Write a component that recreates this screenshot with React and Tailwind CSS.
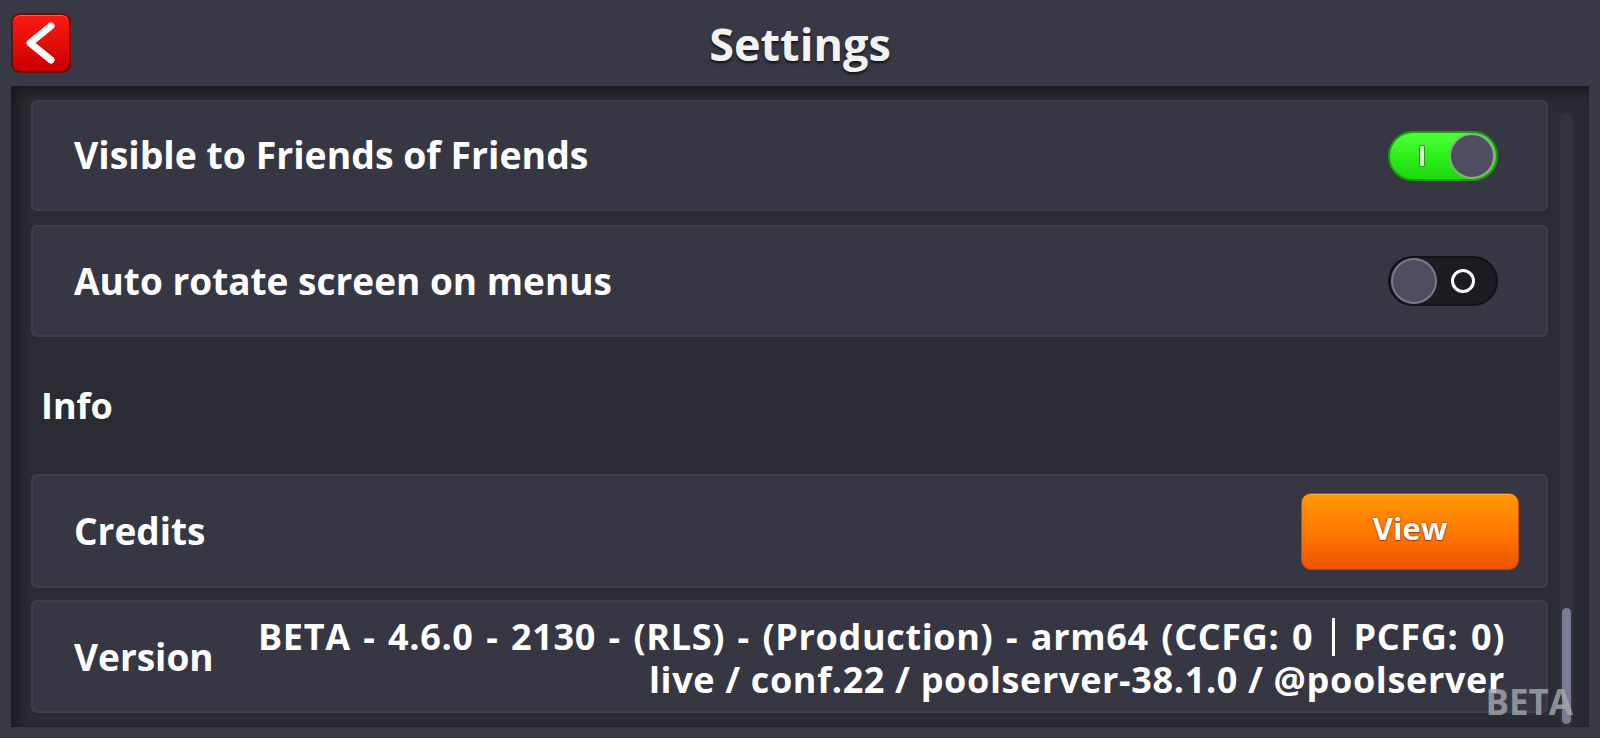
export default function App() {
  const font = { fontFamily: '"Open Sans", "Noto Sans", sans-serif' };

  return (
    <div
      className="flex h-[738px] w-[1600px] flex-col overflow-hidden bg-[#393845] text-white"
      style={font}
    >
      {/* Header */}
      <header className="flex h-[86px] shrink-0 items-center px-[11px]">
        <button className="flex h-[60px] w-[60px] items-center justify-center rounded-[9px] border-2 border-[#6b0d0d] bg-gradient-to-b from-[#ff1a12] to-[#c80000] shadow-[inset_0_1px_0_rgba(255,140,120,0.6)]">
          <svg width="56" height="56" viewBox="0 0 56 56">
            <path
              d="M38 11 L17 28 L38 45"
              fill="none"
              stroke="#fff"
              strokeWidth="7"
              strokeLinecap="round"
              strokeLinejoin="round"
            />
          </svg>
        </button>
        <h1 className="flex-1 text-center text-[45px] font-bold leading-none text-[#f2f2f2] [text-shadow:0_2px_3px_rgba(0,0,0,0.7)]">
          Settings
        </h1>
        <div className="w-[60px]" />
      </header>

      {/* Panel */}
      <main className="mx-[11px] mb-[11px] flex min-h-0 flex-1 gap-[12px] overflow-hidden bg-[#2b2b33] pl-[20px] pr-[16px] shadow-[inset_6px_6px_14px_rgba(0,0,0,0.45)]">
        <div className="relative flex min-w-0 flex-1 flex-col pt-[14px]">
          <Row className="h-[111px]">
            <span className="text-[37.4px] font-bold">Visible to Friends of Friends</span>
            <div className="mr-[48px] flex h-[50px] w-[110px] items-center justify-between rounded-full border-2 border-[#14a008] bg-gradient-to-b from-[#4cff38] via-[#2cf01a] to-[#1cd80c] px-[1px]">
              <div className="ml-[28px] h-[22px] w-[6px] rounded-[2px] border border-[#2a9a1c] bg-[#d6f8c4]" />
              <div className="h-[46px] w-[46px] rounded-full border-2 border-[#8fa88c] bg-[#4f4e60]" />
            </div>
          </Row>

          <Row className="mt-[14px] h-[112px]">
            <span className="text-[37px] font-bold">Auto rotate screen on menus</span>
            <div className="mr-[48px] flex h-[50px] w-[110px] items-center justify-between rounded-full border-2 border-[#111116] bg-[#1c1c22] px-[1px]">
              <div className="h-[46px] w-[46px] rounded-full border-2 border-[#7d7c8e] bg-[#4f4e60]" />
              <div className="mr-[20px] h-[24px] w-[24px] rounded-full border-[3px] border-white" />
            </div>
          </Row>

          <div className="flex h-[137px] items-center pl-[10px]">
            <span className="text-[36px] font-bold">Info</span>
          </div>

          <Row className="h-[114px]">
            <span className="text-[37px] font-bold">Credits</span>
            <button className="mr-[27px] flex h-[77px] w-[218px] items-center justify-center rounded-[10px] border border-[#c24a00] bg-gradient-to-b from-[#ff9708] via-[#ff7a00] to-[#ee5000] pb-[6px] text-[31px] font-bold text-white shadow-[inset_0_1px_0_rgba(255,200,120,0.6)] [text-shadow:0_0_2px_#a33c00,0_1px_1px_#a33c00,0_0_1px_#a33c00]">
              View
            </button>
          </Row>

          <Row className="mt-[12px] h-[113px]">
            <span className="text-[37px] font-bold">Version</span>
            <div className="mr-[41px] text-right text-[36px] font-bold leading-[43px] tracking-[0.65px]">
              <div className="[word-spacing:2.6px]">
                BETA - 4.6.0 - 2130 - (RLS) - (Production) - arm64 (CCFG: 0{" "}
                <span className="mx-[6px] inline-block h-[38px] w-[3px] translate-y-[6px] bg-white" />{" "}
                PCFG: 0)
              </div>
              <div>live / conf.22 / poolserver-38.1.0 / @poolserver</div>
            </div>
          </Row>
        </div>

        {/* Scrollbar */}
        <div className="relative mt-[27px] w-[13px] shrink-0 rounded-full bg-[#33333d]">
          <div className="absolute bottom-[3px] left-[2px] h-[116px] w-[9px] rounded-full bg-[#7b7a95]" />
          <span className="absolute bottom-[8px] right-[0px] text-[35px] font-bold leading-none text-[#a9a9b0]/80">
            BETA
          </span>
        </div>
      </main>
    </div>
  );
}

function Row({ className = "", children }) {
  return (
    <div
      className={`flex shrink-0 items-center justify-between rounded-[6px] border-2 border-[#3e3f4b] bg-[#363743] pl-[41px] ${className}`}
    >
      {children}
    </div>
  );
}
